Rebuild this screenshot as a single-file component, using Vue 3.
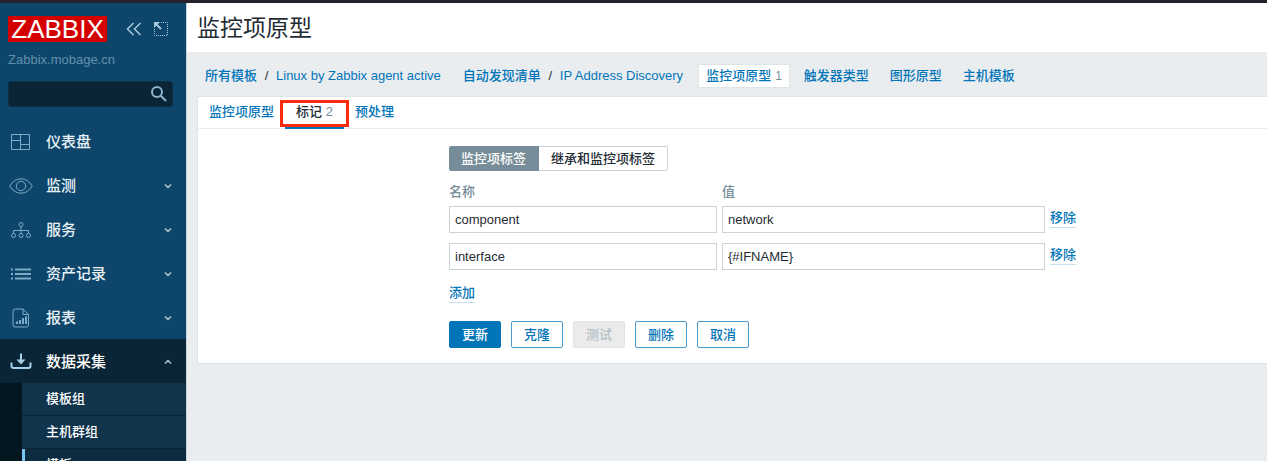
<script setup>
import { ref } from 'vue'

const search = ref('')
const menu = [
  { icon: 'dashboard', label: '仪表盘', arrow: false },
  { icon: 'eye', label: '监测', arrow: true },
  { icon: 'services', label: '服务', arrow: true },
  { icon: 'list', label: '资产记录', arrow: true },
  { icon: 'report', label: '报表', arrow: true },
  { icon: 'collect', label: '数据采集', arrow: true, open: true }
]
const submenu = ['模板组', '主机群组', '模板']
const tags = ref([
  { name: 'component', value: 'network' },
  { name: 'interface', value: '{#IFNAME}' }
])
</script>

<template>
  <div class="page">
    <div class="topbar"></div>
    <div class="shell">
      <aside class="sidebar">
        <div class="brand">
          <a class="logo" href="#">ZABBIX</a>
          <button class="tool collapse" type="button" aria-label="折叠">
            <svg width="16" height="14" viewBox="0 0 16 14"><path d="M7.5 1 1.5 7l6 6M14.500 1l-6 6 6 6" /></svg>
          </button>
          <button class="tool" type="button" aria-label="隐藏">
            <svg width="14" height="14" viewBox="0 0 14 14">
              <path class="dots" d="M7 .5h6.500v13H.5V7" />
              <path d="M2 2l5 5" stroke-width="2" />
              <path class="solid" d="M0 0h6L0 6z" />
            </svg>
          </button>
        </div>
        <div class="server">Zabbix.mobage.cn</div>
        <form class="search" @submit.prevent>
          <input v-model="search" type="text" aria-label="搜索" />
          <button type="submit" aria-label="搜索">
            <svg width="16" height="16" viewBox="0 0 16 16"><circle cx="6" cy="6" r="5" /><path d="M9.500 9.500 15 15" /></svg>
          </button>
        </form>
        <nav>
          <ul class="menu">
            <li v-for="item in menu" :key="item.label">
              <a href="#" :class="{ open: item.open }">
                <svg class="icon" width="24" height="20" viewBox="0 0 24 20">
                  <template v-if="item.icon === 'dashboard'">
                    <path d="M2.500 2.500h18v15h-18zM11.500 2.500v15M2.500 8.500h9M11.500 12.500h9" />
                  </template>
                  <template v-else-if="item.icon === 'eye'">
                    <path d="M.8 10Q5 2.800 12 2.800T23.200 10Q19 17.200 12 17.200T.8 10z" />
                    <circle cx="12" cy="10" r="4.700" />
                  </template>
                  <template v-else-if="item.icon === 'services'">
                    <circle cx="12" cy="4.500" r="2" />
                    <circle cx="4.500" cy="15.500" r="2" />
                    <circle cx="12" cy="15.500" r="2" />
                    <circle cx="19.500" cy="15.500" r="2" />
                    <path d="M12 6.500v7M4.500 13.500v-3h15v3" />
                  </template>
                  <template v-else-if="item.icon === 'list'">
                    <path d="M2 5.500h2M6 5.500h16M2 10h2M6 10h16M2 14.500h2M6 14.500h16" stroke-width="2" />
                  </template>
                  <template v-else-if="item.icon === 'report'">
                    <path d="M6 1h8l5.500 5.500v10.500a2 2 0 0 1-2 2H6a2 2 0 0 1-2-2v-14a2 2 0 0 1 2-2zM14 1v5.500h5.500z" />
                    <path d="M8 16v-2.500M11 16v-4M14 16v-6M17 16V8.500" stroke-width="2" />
                  </template>
                  <template v-else>
                    <path d="M2.500 10.500v3.500a2 2 0 0 0 2 2h15a2 2 0 0 0 2-2v-3.500" stroke-width="2" />
                    <path d="M12 1.500v8" stroke-width="2" />
                    <path class="solid" d="M7.500 7.500h9L12 12.500z" />
                  </template>
                </svg>
                <span>{{ item.label }}</span>
                <svg v-if="item.arrow" class="arrow" width="8" height="6" viewBox="0 0 8 6">
                  <path :d="item.open ? 'M1 4.500l3-3 3 3' : 'M1 1.500l3 3 3-3'" />
                </svg>
              </a>
            </li>
          </ul>
          <ul class="submenu">
            <li v-for="(label, i) in submenu" :key="label">
              <a href="#" :class="{ current: i === 2 }">{{ label }}</a>
            </li>
          </ul>
        </nav>
      </aside>

      <main class="main">
        <header class="title"><h1>监控项原型</h1></header>
        <nav class="crumbs">
          <a href="#">所有模板</a><span class="slash">/</span><a href="#">Linux by Zabbix agent active</a>
          <a class="group" href="#">自动发现清单</a><span class="slash">/</span><a href="#">IP Address Discovery</a>
          <span class="selected"><a href="#">监控项原型</a><sup>1</sup></span>
          <a class="next" href="#">触发器类型</a>
          <a class="next" href="#">图形原型</a>
          <a class="next" href="#">主机模板</a>
        </nav>
        <section class="panel">
          <nav class="tabs">
            <a href="#">监控项原型</a>
            <a class="active" href="#">标记 <span>2</span></a>
            <a href="#">预处理</a>
          </nav>
          <form class="form" @submit.prevent>
            <div class="segmented">
              <button class="on" type="button">监控项标签</button>
              <button type="button">继承和监控项标签</button>
            </div>
            <table class="tags">
              <thead>
                <tr><th class="name">名称</th><th class="value">值</th><th></th></tr>
              </thead>
              <tbody>
                <tr v-for="tag in tags" :key="tag.name">
                  <td><input v-model="tag.name" type="text" aria-label="名称" /></td>
                  <td><input v-model="tag.value" type="text" aria-label="值" /></td>
                  <td class="remove"><button class="link" type="button">移除</button></td>
                </tr>
              </tbody>
            </table>
            <button class="link" type="button">添加</button>
            <div class="actions">
              <button class="primary" type="submit">更新</button>
              <button type="button">克隆</button>
              <button type="button" disabled>测试</button>
              <button type="button">删除</button>
              <button type="button">取消</button>
            </div>
          </form>
        </section>
      </main>
    </div>
  </div>
</template>

<style>
body {
  margin: 0;
  overflow: hidden;
}
</style>

<style scoped>
* {
  box-sizing: border-box;
}
.page {
  height: 100vh;
  display: flex;
  flex-direction: column;
  overflow: hidden;
  background: #e9edf0;
  color: #1f2c33;
  font: 500 13px/20px "Liberation Sans", "Noto Sans CJK SC", sans-serif;
}
a {
  color: #0275b8;
  text-decoration: none;
}
button,
input {
  font: inherit;
  color: inherit;
}
button {
  padding: 0;
  border: 0;
  background: none;
}
svg {
  display: block;
  fill: none;
  stroke: currentColor;
}
.solid {
  fill: currentColor;
  stroke: none;
}
ul {
  margin: 0;
  padding: 0;
  list-style: none;
}
.topbar {
  flex: none;
  height: 3px;
  background: #25222b;
}
.shell {
  flex: 1;
  display: flex;
  min-height: 0;
}

/* Sidebar */
.sidebar {
  flex: none;
  width: 186px;
  background: #0d466a;
}
.brand {
  display: flex;
  align-items: center;
  padding: 13px 8px 0;
}
.logo {
  width: 99px;
  height: 26px;
  background: #d40000;
  color: #fff;
  font-size: 26px;
  line-height: 27px;
  text-align: center;
}
.tool {
  margin-left: 12px;
  color: #a9c8dc;
}
.tool svg {
  stroke-width: 1.500;
}
.collapse {
  margin-left: 19px;
}
.tool .dots {
  stroke-width: 1;
  stroke-dasharray: 1 1;
}
.server {
  padding: 8px 8px 0;
  color: #6390ac;
}
.search {
  display: flex;
  align-items: center;
  height: 26px;
  margin: 11px 13px 12px 8px;
  padding-right: 5px;
  border: 1px solid #0a2f46;
  border-radius: 3px;
  background: #0a2536;
}
.search input {
  flex: 1;
  min-width: 0;
  border: 0;
  outline: 0;
  background: none;
  color: #fff;
}
.search button {
  color: #8fb3c9;
}
.search svg {
  stroke-width: 2;
}
.menu a {
  display: flex;
  align-items: center;
  height: 44px;
  padding: 1px 14px 0 9px;
  color: #e8f1f6;
  font-size: 15px;
}
.menu a.open {
  background: #0a2536;
  color: #fff;
}
.icon {
  margin-right: 13px;
  color: #7eabc6;
}
.open .icon {
  color: #a5d0ea;
}
.arrow {
  margin-left: auto;
  color: #b5cddb;
  stroke-width: 1.500;
}
.submenu {
  border-left: 22px solid #04161f;
  background: #0f344c;
}
.submenu a {
  display: block;
  height: 33px;
  padding-left: 24px;
  border-bottom: 1px solid #0a2333;
  color: #fff;
  line-height: 32px;
}
.submenu .current {
  padding-left: 21px;
  border-left: 3px solid #78c4f5;
  background: #0c2c41;
}

/* Content */
.main {
  flex: 1;
  min-width: 0;
  border-left: 1px solid #c8d3da;
}
.title {
  height: 49px;
  padding-left: 10px;
  background: #fff;
}
h1 {
  margin: 0;
  font-size: 23px;
  font-weight: 400;
  line-height: 51px;
}
.crumbs {
  display: flex;
  align-items: center;
  height: 44px;
  padding: 3px 0 0 18px;
  white-space: nowrap;
}
.slash {
  width: 19px;
  text-align: center;
}
.group {
  margin-left: 22px;
}
.selected {
  margin-left: 15px;
  padding: 1px 7px;
  border: 1px solid #dfe4e7;
  background: #fff;
}
.selected sup {
  margin-left: 4px;
  color: #768d99;
  font-size: 12px;
  line-height: 20px;
  vertical-align: baseline;
}
.next {
  margin-left: 14px;
}
.next + .next {
  margin-left: 21px;
}
.panel {
  margin-left: 10px;
  border: 1px solid #dfe4e7;
  border-right: 0;
  background: #fff;
}
.tabs {
  display: flex;
  height: 32px;
  border-bottom: 1px solid #ebeef0;
}
.tabs a {
  height: 32px;
  padding: 0 11px;
  line-height: 30px;
}
.tabs .active {
  position: relative;
  border-bottom: 2px solid #0275b8;
  color: #1f2c33;
}
.tabs .active::after {
  content: "";
  position: absolute;
  inset: 3px -5px 0;
  border: 3px solid #fa2a0c;
}
.tabs span {
  color: #768d99;
}
.form {
  padding: 17px 0 15px 251px;
}
.segmented {
  display: flex;
}
.segmented button {
  height: 25px;
  padding: 0 12px;
  border: 1px solid #c8d3da;
  border-left: 0;
  border-radius: 0 2px 2px 0;
}
.segmented .on {
  padding: 0 13px 0 12px;
  border: 0;
  border-radius: 2px 0 0 2px;
  background: #768d99;
  color: #fff;
}
.tags {
  margin: 11px 0 3px;
  border-collapse: collapse;
}
.tags th {
  padding: 0 0 4px;
  color: #768d99;
  font-weight: 500;
  text-align: left;
}
.tags td {
  padding: 0 5px 10px 0;
}
.tags .remove {
  padding-bottom: 13px;
}
.tags .name {
  width: 273px;
}
.tags .value {
  width: 328px;
}
.tags input {
  display: block;
  width: 100%;
  height: 27px;
  padding: 0 5px;
  border: 1px solid #c8d3da;
  outline: 0;
  background: #fff;
}
.link {
  display: block;
  border-bottom: 1px solid #c9e0ee;
  color: #0275b8;
  line-height: 19px;
}
.actions {
  display: flex;
  gap: 10px;
  margin-top: 18px;
}
.actions button {
  width: 52px;
  height: 27px;
  border: 1px solid #4a9dcd;
  border-radius: 2px;
  background: #fff;
  color: #0275b8;
}
.actions .primary {
  border-color: #0275b8;
  background: #0275b8;
  color: #fff;
}
.actions button:disabled {
  border-color: #dfe4e7;
  background: #ebebeb;
  color: #b3bfc6;
}
</style>
